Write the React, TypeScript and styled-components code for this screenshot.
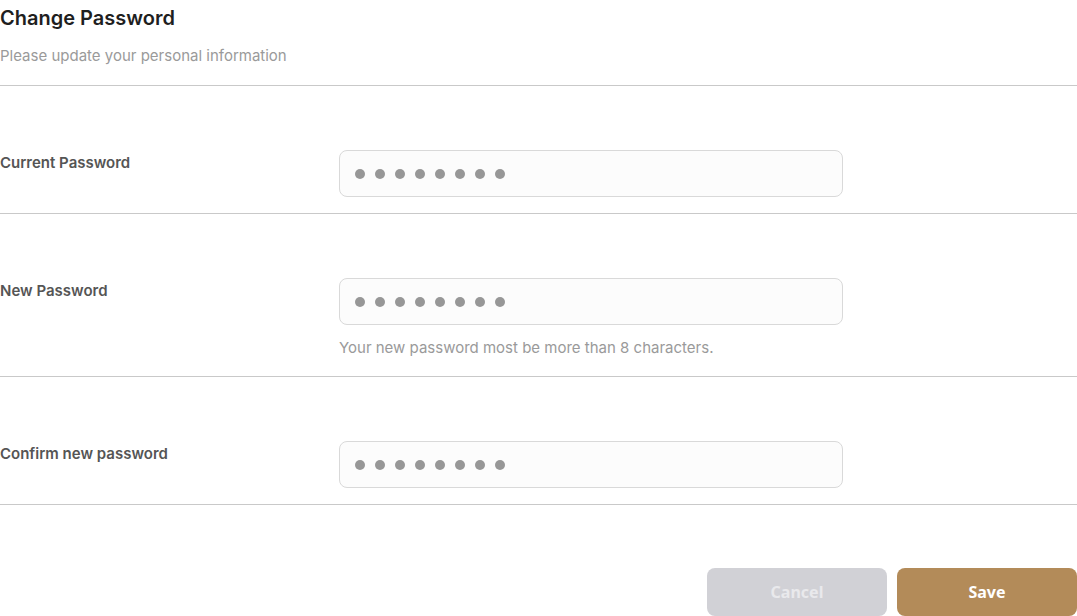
import React from 'react';
import styled, { createGlobalStyle } from 'styled-components';

const GlobalStyle = createGlobalStyle`
  html, body {
    margin: 0;
    padding: 0;
    background: #ffffff;
    font-family: Inter, 'Noto Sans', sans-serif;
  }
  * { box-sizing: border-box; }
`;

const Page = styled.main`
  width: 1077px;
  display: flex;
  flex-direction: column;
`;

const Header = styled.header`
  padding-top: 6px;
  padding-bottom: 19px;
  border-bottom: 1px solid #c9c9c9;
`;

const Title = styled.h1`
  margin: 0;
  font-size: 20px;
  line-height: 24px;
  font-weight: 600;
  color: #1f1f1f;
`;

const Subtitle = styled.p`
  margin: 16px 0 0;
  font-size: 15px;
  line-height: 20px;
  color: #9a9a9a;
`;

const Row = styled.section`
  display: grid;
  grid-template-columns: 339px 504px;
  padding: 64px 0 16px;
  border-bottom: 1px solid #c9c9c9;
`;

const Label = styled.label`
  margin-top: 3px;
  font-size: 15px;
  line-height: 20px;
  font-weight: 600;
  color: #555555;
`;

const Control = styled.div`
  display: flex;
  flex-direction: column;
`;

const Input = styled.div`
  height: 47px;
  display: flex;
  align-items: center;
  gap: 10px;
  padding: 0 15px;
  background: #fcfcfc;
  border: 1px solid #d9d9d9;
  border-radius: 8px;
`;

const Dot = styled.span`
  width: 10px;
  height: 10px;
  border-radius: 50%;
  background: #979797;
`;

const Hint = styled.p`
  margin: 13px 0 2px;
  font-size: 15px;
  line-height: 20px;
  color: #9a9a9a;
`;

const Actions = styled.footer`
  display: flex;
  justify-content: flex-end;
  gap: 10px;
  padding-top: 63px;
`;

const Button = styled.button<{ $primary?: boolean }>`
  width: 180px;
  height: 48px;
  border: none;
  border-radius: 8px;
  font-family: 'Noto Sans', Inter, sans-serif;
  font-size: 16px;
  font-weight: 700;
  color: ${(p) => (p.$primary ? '#ffffff' : '#e9e9ec')};
  background: ${(p) => (p.$primary ? '#b38b59' : '#d1d1d6')};
  cursor: pointer;
`;

type FieldProps = {
  label: string;
  hint?: string;
  length?: number;
};

const PasswordRow = ({ label, hint, length = 8 }: FieldProps) => (
  <Row>
    <Label>{label}</Label>
    <Control>
      <Input aria-label={label}>
        {Array.from({ length }).map((_, i) => (
          <Dot key={i} />
        ))}
      </Input>
      {hint && <Hint>{hint}</Hint>}
    </Control>
  </Row>
);

const App = () => {
  return (
    <>
      <GlobalStyle />
      <Page>
        <Header>
          <Title>Change Password</Title>
          <Subtitle>Please update your personal information</Subtitle>
        </Header>
        <PasswordRow label="Current Password" />
        <PasswordRow
          label="New Password"
          hint="Your new password most be more than 8 characters."
        />
        <PasswordRow label="Confirm new password" />
        <Actions>
          <Button>Cancel</Button>
          <Button $primary>Save</Button>
        </Actions>
      </Page>
    </>
  );
};

export default App;
